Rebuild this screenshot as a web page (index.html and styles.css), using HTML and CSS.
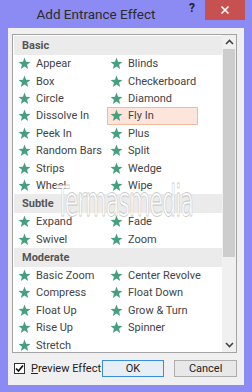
FILE: index.html
```html
<!DOCTYPE html>
<html lang="en">
<head>
    <meta charset="UTF-8">
    <title>Add Entrance Effect</title>
    <link rel="stylesheet" href="styles.css">
</head>
<body>
    <svg width="0" height="0" class="defs">
        <symbol id="star" viewBox="0 0 24 24">
            <path d="M12 1 L14.9 8.6 L23 9 L16.7 14.1 L18.8 22 L12 17.6 L5.2 22 L7.3 14.1 L1 9 L9.1 8.6 Z"/>
        </symbol>
    </svg>

    <div class="window">
        <div class="titlebar">
            <span class="title">Add Entrance Effect</span>
            <span class="help">?</span>
            <span class="close">
                <svg width="10" height="10" viewBox="0 0 10 10"><path d="M1.5 1.5 L8.5 8.5 M8.5 1.5 L1.5 8.5" stroke="#fff" stroke-width="1.6"/></svg>
            </span>
        </div>

        <div class="client">
            <div class="listbox">
                <div class="list">
                    <div class="group">Basic</div>
                    <div class="grid" id="basic"></div>
                    <div class="group">Subtle</div>
                    <div class="grid" id="subtle"></div>
                    <div class="group">Moderate</div>
                    <div class="grid" id="moderate"></div>
                </div>
                <div class="scrollbar">
                    <div class="arrow">
                        <svg width="9" height="6" viewBox="0 0 9 6"><path d="M1 5 L4.5 1.5 L8 5" fill="none" stroke="#444" stroke-width="1.6"/></svg>
                    </div>
                    <div class="track">
                        <div class="thumb"></div>
                    </div>
                    <div class="arrow">
                        <svg width="9" height="6" viewBox="0 0 9 6"><path d="M1 1 L4.5 4.5 L8 1" fill="none" stroke="#444" stroke-width="1.6"/></svg>
                    </div>
                </div>
                <div class="watermark">Termasmedia</div>
            </div>

            <div class="footer">
                <label class="check">
                    <span class="box">
                        <svg width="9" height="9" viewBox="0 0 9 9"><path d="M1 4.5 L3.5 7 L8 1.5" fill="none" stroke="#111" stroke-width="1.7"/></svg>
                    </span>
                    <span><u>P</u>review Effect</span>
                </label>
                <button class="btn default">OK</button>
                <button class="btn">Cancel</button>
            </div>
        </div>
    </div>

    <script>
        const effects = {
            basic: ['Appear', 'Blinds', 'Box', 'Checkerboard', 'Circle', 'Diamond', 'Dissolve In', 'Fly In',
                    'Peek In', 'Plus', 'Random Bars', 'Split', 'Strips', 'Wedge', 'Wheel', 'Wipe'],
            subtle: ['Expand', 'Fade', 'Swivel', 'Zoom'],
            moderate: ['Basic Zoom', 'Center Revolve', 'Compress', 'Float Down', 'Float Up', 'Grow & Turn',
                       'Rise Up', 'Spinner', 'Stretch']
        };

        for (const group in effects) {
            const grid = document.getElementById(group);
            grid.innerHTML = effects[group].map(name => {
                const cls = name === 'Fly In' ? 'item selected' : 'item';
                return `<div class="${cls}"><svg class="star"><use href="#star"/></svg><span>${name}</span></div>`;
            }).join('');
        }
    </script>
</body>
</html>
```

FILE: styles.css
```css
body {
    margin: 0;
    width: 252px;
    height: 392px;
    background-color: #8b8bf3;
    font-family: Roboto, "Noto Sans", sans-serif;
    overflow: hidden;
}

.defs {
    position: absolute;
}

.window {
    display: flex;
    flex-direction: column;
    height: 392px;
}

.titlebar {
    height: 28px;
    position: relative;
    display: flex;
    justify-content: center;
    align-items: center;
}

.title {
    font-size: 13.5px;
    color: #2b2b2b;
    margin-left: -60px;
    margin-top: -1px;
}

.help {
    position: absolute;
    left: 189px;
    top: 1px;
    font-size: 12px;
    font-weight: bold;
    color: #222;
}

.close {
    position: absolute;
    left: 205px;
    top: 0;
    width: 40px;
    height: 20px;
    background-color: #c75050;
    display: flex;
    justify-content: center;
    align-items: center;
}

.client {
    flex: 1;
    margin: 0 8px 7px 8px;
    background-color: #f0f0f0;
    padding: 6px 7px 0 4px;
}

.listbox {
    height: 317px;
    border: 1px solid #a3a3a3;
    background-color: #fff;
    display: flex;
    position: relative;
}

.list {
    flex: 1;
    padding: 1px 0 0 1px;
    overflow: hidden;
}

.group {
    height: 19px;
    line-height: 19px;
    background-color: #ebebeb;
    padding-left: 8px;
    font-size: 11px;
    font-weight: bold;
    color: #555;
}

.grid {
    display: grid;
    grid-template-columns: 92px 92px;
}

.item {
    height: 17.4px;
    display: flex;
    align-items: center;
    gap: 5px;
    padding-left: 3px;
    margin-left: 1px;
    box-sizing: border-box;
    font-size: 11px;
    color: #444;
    white-space: nowrap;
}

.item.selected {
    background-color: #fde5db;
    border: 1px solid #f5b99c;
    padding-left: 2px;
}

.star {
    width: 13px;
    height: 13px;
    fill: #46a080;
    flex-shrink: 0;
}

.scrollbar {
    width: 14px;
    display: flex;
    flex-direction: column;
    background-color: #f0f0f0;
}

.arrow {
    height: 14px;
    display: flex;
    justify-content: center;
    align-items: center;
}

.track {
    flex: 1;
}

.thumb {
    height: 208px;
    margin: 0 1px;
    background-color: #cdcdcd;
}

.watermark {
    position: absolute;
    left: 43px;
    top: 146px;
    font-family: "DejaVu Sans", sans-serif;
    font-size: 28px;
    line-height: 28px;
    letter-spacing: -1px;
    transform: scaleX(0.78) scaleY(1.5);
    transform-origin: left top;
    color: rgba(255, 255, 255, 0.85);
    -webkit-text-stroke: 0.6px rgba(150, 150, 150, 0.5);
    pointer-events: none;
}

.footer {
    display: flex;
    align-items: center;
    height: 30px;
    padding-left: 2px;
}

.check {
    display: flex;
    align-items: center;
    gap: 6px;
    font-size: 11px;
    color: #222;
    width: 88px;
    white-space: nowrap;
}

.box {
    width: 9px;
    height: 9px;
    border: 1px solid #333;
    background-color: #fff;
    display: flex;
    justify-content: center;
    align-items: center;
    flex-shrink: 0;
}

.btn {
    width: 63px;
    height: 17px;
    padding: 0;
    margin-right: 10px;
    font-family: Roboto, "Noto Sans", sans-serif;
    font-size: 11px;
    color: #222;
    background-color: #e8e8e8;
    border: 1px solid #adadad;
}

.btn.default {
    border-color: #3c8ddc;
    background-color: #e6eef6;
}

.btn:last-child {
    margin-right: 0;
}
```
